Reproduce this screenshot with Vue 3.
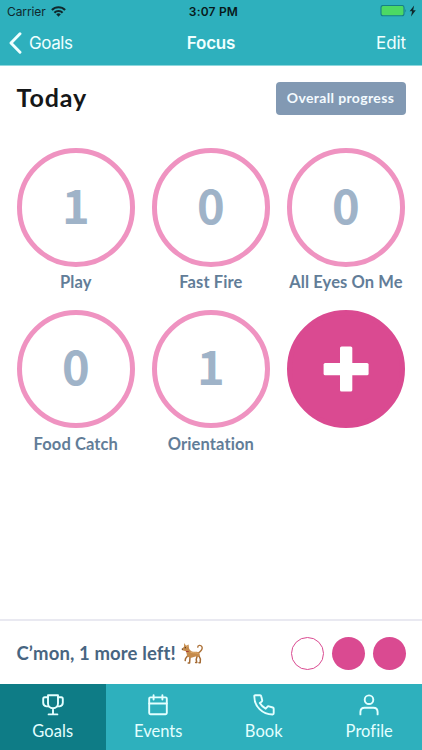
<script setup>
const goals = [
  { name: 'Play', count: 1 },
  { name: 'Fast Fire', count: 0 },
  { name: 'All Eyes On Me', count: 0 },
  { name: 'Food Catch', count: 0 },
  { name: 'Orientation', count: 1 },
]
const tabs = [
  { name: 'Goals', icon: 'trophy', active: true },
  { name: 'Events', icon: 'calendar' },
  { name: 'Book', icon: 'phone' },
  { name: 'Profile', icon: 'person' },
]
</script>

<template>
  <div class="screen">
    <header class="top">
      <div class="status">
        <div class="carrier">
          <span>Carrier</span>
          <svg width="15" height="11" viewBox="0 0 15 11">
            <g fill="none" stroke="#10282c" stroke-width="2.1">
              <path d="M.9 4.1A9.2 9.2 0 0 1 14.1 4.1" />
              <path d="M3.4 6.8A5.7 5.7 0 0 1 11.6 6.8" />
            </g>
            <path d="M5.2 8.3A3.3 3.3 0 0 1 9.8 8.3L7.5 10.8Z" fill="#10282c" />
          </svg>
        </div>
        <div class="clock">3:07 PM</div>
        <div class="power">
          <svg width="37" height="12" viewBox="0 0 37 12">
            <rect x="1" y=".5" width="23" height="10.2" rx="2" fill="#4cd964" stroke="#168087" stroke-width="1.1" />
            <path d="M25.4 4Q26.9 5.6 25.4 7.4Z" fill="#168087" />
            <path d="M34.1 .4L29.6 6.3H32.1L31 11.4L35.8 5.2H33.2Z" fill="#10282c" />
          </svg>
        </div>
      </div>
      <nav class="nav">
        <div class="back">
          <svg width="13" height="22" viewBox="0 0 13 22"><path d="M11 1.8L2 11L11 20.2" fill="none" stroke="#f0ffff" stroke-width="2.9" stroke-linecap="round" stroke-linejoin="round" /></svg>
          <span>Goals</span>
        </div>
        <div class="nav-title">Focus</div>
        <div class="edit"><span>Edit</span></div>
      </nav>
    </header>

    <main class="content">
      <div class="heading">
        <h1>Today</h1>
        <button class="progress">Overall progress</button>
      </div>
      <div class="grid">
        <div v-for="g in goals" :key="g.name" class="goal">
          <div class="ring"><span>{{ g.count }}</span></div>
          <div class="label">{{ g.name }}</div>
        </div>
        <div class="goal">
          <div class="ring add">
            <svg width="46" height="46" viewBox="0 0 46 46" fill="#fff">
              <rect x="17" y="0.5" width="12.3" height="45" rx="1.6" />
              <rect x="0.6" y="17" width="45" height="12.3" rx="1.6" />
            </svg>
          </div>
        </div>
      </div>
    </main>

    <section class="summary">
      <span class="message">C’mon, 1 more left!</span>
      <svg class="dog" width="23" height="23" viewBox="0 0 23 23">
        <path d="M17.3 11C19.8 9.2 22 7 20.9 4.7C19.9 2.7 16.7 3 16.8 5.1" fill="none" stroke="#ad7239" stroke-width="1.4" stroke-linecap="round" />
        <path d="M6.5 14L4.5 16.6L4.2 18.6M9 15L8.6 21H7.2M16.2 14L15.2 17.5L15.8 20.6H14.6M17.8 13.5L19.4 17L19.2 20.8H18" fill="none" stroke="#a46b35" stroke-width="1.5" stroke-linecap="round" stroke-linejoin="round" />
        <path d="M3.2 1.1L5 3.7L7.6 2.4L8 6.2C8.6 8.1 10 9.4 12.6 9.8C15.6 9.7 18.5 9.6 18.8 12.2L18.2 15L14.6 14.4L9.5 16L6.3 14.6L5 9.2L1.3 8.2L1 6.8L3 4.8Z" fill="#c58b4c" />
        <path d="M9.4 10.2C12 11.2 15.6 10.4 17.3 11.4M5.4 5L7 3.7" fill="none" stroke="#dfac6c" stroke-width="1" />
        <path d="M4.8 8.9H7.8L7.6 10H5.1Z" fill="#a83e35" />
        <circle cx="4.3" cy="5.7" r=".6" fill="#40281d" />
        <circle cx="1.3" cy="7.1" r=".7" fill="#40281d" />
      </svg>
      <div class="dots"><i class="empty"></i><i></i><i></i></div>
    </section>

    <footer class="tabs">
      <div v-for="t in tabs" :key="t.name" class="tab" :class="{ active: t.active }">
        <svg width="22" height="22" viewBox="0 0 22 22" fill="none" stroke="#e4ffff" stroke-width="1.9" stroke-linecap="round" stroke-linejoin="round">
          <template v-if="t.icon === 'trophy'">
            <path d="M6 1.3H16V9.5C16 12 14 14.2 11 14.2S6 12 6 9.5ZM11 14.3V20.3M6.6 20.4H15.4" />
            <path d="M6 3.3H2.7Q1.2 3.3 1.2 4.9V8.8Q1.2 11.8 4.4 12.4H6.6M16 3.3H19.3Q20.8 3.3 20.8 4.9V8.8Q20.8 11.8 17.6 12.4H15.4" />
          </template>
          <template v-else-if="t.icon === 'calendar'">
            <rect x="2.2" y="3.4" width="17.6" height="16.9" rx="1.2" />
            <path d="M2.2 9.5H19.8M6.6 1.3V5.6M15.4 1.3V5.6" />
          </template>
          <path v-else-if="t.icon === 'phone'" d="M1.3 2.2Q1.3 1.2 2.3 1.2H7Q8 1.2 8.2 2.2L9.2 6.2Q9.4 7.1 8.6 7.7L6.8 9.1Q8.9 12.7 12.7 14.7L14.3 12.9Q14.9 12.1 15.9 12.4L19.8 13.5Q20.7 13.8 20.7 14.7V19.3Q20.7 20.5 19.6 20.5C9.2 20.5 1.3 12.4 1.3 2.2Z" />
          <template v-else>
            <circle cx="11" cy="5.7" r="4.3" />
            <path d="M2.4 20.4V18Q2.4 13.7 6.7 13.7H15.3Q19.6 13.7 19.6 18V20.4" />
          </template>
        </svg>
        <span>{{ t.name }}</span>
      </div>
    </footer>
  </div>
</template>

<style>
body { margin: 0; background: #fff; }
</style>

<style scoped>
* { box-sizing: border-box; }
.screen { width: 422px; height: 750px; display: flex; flex-direction: column; overflow: hidden; background: #fff; font-family: Lato, "Open Sans", sans-serif; }
.top { height: 66px; flex: none; background: #2eb0bd; border-bottom: 1px solid #8ed7dd; color: #f0ffff; }
.status { height: 22px; display: grid; grid-template-columns: 1fr auto 1fr; align-items: center; padding: 0 5px 0 7px; color: #10282c; font-family: Inter, sans-serif; font-size: 12px; }
.carrier { display: flex; align-items: center; gap: 5px; letter-spacing: -.1px; }
.clock { font-weight: 600; letter-spacing: .2px; padding-left: 3px; color: #08191b; }
.power { display: flex; justify-content: flex-end; }
.nav { height: 41px; display: grid; grid-template-columns: 1fr auto 1fr; align-items: center; padding: 0 16px; font-family: Inter, sans-serif; font-size: 17px; }
.back { display: flex; align-items: center; gap: 7px; margin-left: -7px; letter-spacing: -.45px; }
.nav-title { font-weight: 600; letter-spacing: -.2px; }
.edit { text-align: right; letter-spacing: -.1px; }
.content { flex: 1; padding: 16px 16.5px 0; }
.heading { height: 33px; display: flex; justify-content: space-between; align-items: center; }
h1 { margin: 0; font-size: 25px; line-height: 33px; font-weight: 700; letter-spacing: .9px; color: #151718; padding-bottom: 2px; }
.progress { width: 130px; height: 33px; padding: 0 0 2px; border: 0; border-radius: 4px; background: #8299b3; color: #f4fbff; font: 700 14px Lato, sans-serif; letter-spacing: .35px; white-space: nowrap; }
.grid { padding-top: 33px; display: grid; grid-template-columns: repeat(3, 118.5px); column-gap: 16.6px; grid-auto-rows: 161.5px; }
.goal { display: flex; flex-direction: column; align-items: center; }
.ring { width: 118.5px; height: 118.5px; flex: none; border: 5px solid #ef93c1; border-radius: 50%; display: flex; align-items: center; justify-content: center; color: #9fb3c8; font-family: "Noto Sans CJK JP", sans-serif; font-size: 47px; font-weight: 700; line-height: 58px; }
.ring span { padding-bottom: 7px; }
.add { border-color: #da4a91; background: #da4a91; }
.label { margin-top: 4.5px; font-size: 16.5px; line-height: 22px; font-weight: 700; color: #627d98; white-space: nowrap; letter-spacing: .1px; }
.summary { height: 65px; flex: none; display: flex; align-items: center; padding: 1px 16.5px 0; border-top: 2px solid #e9e9f1; }
.message { font-size: 18.5px; font-weight: 700; color: #486581; letter-spacing: .12px; white-space: nowrap; }
.dog { margin-left: 5px; }
.dots { margin-left: auto; display: flex; gap: 8px; }
.dots i { width: 33px; height: 33px; border-radius: 50%; background: #da4a91; }
.dots .empty { background: #fff; border: 1px solid #da4a91; }
.tabs { height: 66px; flex: none; display: grid; grid-template-columns: repeat(4, 1fr); background: #2eb0bd; }
.tab { display: flex; flex-direction: column; align-items: center; padding-top: 10px; color: #e4ffff; font-size: 16.5px; line-height: 20px; letter-spacing: .05px; }
.tab span { margin-top: 5px; }
.active { background: #0e7c86; }
</style>
